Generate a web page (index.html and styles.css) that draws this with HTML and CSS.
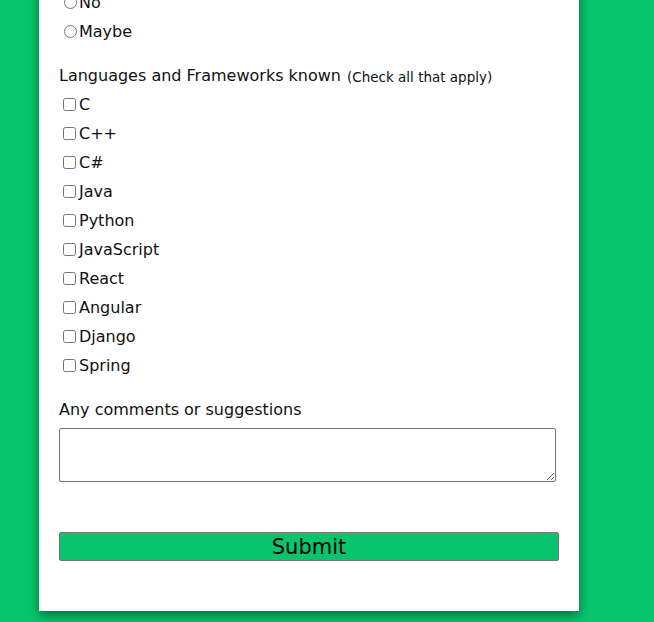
FILE: index.html
```html
<!DOCTYPE html>
<html>
<head>
<meta charset="utf-8">
<link rel="stylesheet" href="styles.css">
</head>
<body>
<form class="card">
  <div class="option"><input type="radio" name="rec" id="no"><label for="no">No</label></div>
  <div class="option"><input type="radio" name="rec" id="maybe"><label for="maybe">Maybe</label></div>

  <div class="heading">Languages and Frameworks known <span class="hint">(Check all that apply)</span></div>
  <div class="option"><input type="checkbox" id="c"><label for="c">C</label></div>
  <div class="option"><input type="checkbox" id="cpp"><label for="cpp">C++</label></div>
  <div class="option"><input type="checkbox" id="cs"><label for="cs">C#</label></div>
  <div class="option"><input type="checkbox" id="java"><label for="java">Java</label></div>
  <div class="option"><input type="checkbox" id="python"><label for="python">Python</label></div>
  <div class="option"><input type="checkbox" id="js"><label for="js">JavaScript</label></div>
  <div class="option"><input type="checkbox" id="react"><label for="react">React</label></div>
  <div class="option"><input type="checkbox" id="angular"><label for="angular">Angular</label></div>
  <div class="option"><input type="checkbox" id="django"><label for="django">Django</label></div>
  <div class="option"><input type="checkbox" id="spring"><label for="spring">Spring</label></div>

  <div class="heading">Any comments or suggestions</div>
  <textarea class="comments"></textarea>

  <button type="button" class="submit">Submit</button>
</form>
</body>
</html>
```

FILE: styles.css
```css
html, body {
  margin: 0;
  padding: 0;
}
body {
  background: #08c46c;
  font-family: "DejaVu Sans", sans-serif;
  font-size: 16px;
  color: #111;
  overflow: hidden;
  height: 622px;
}
.card {
  box-sizing: border-box;
  width: 540px;
  margin: -32px 0 0 39px;
  padding: 20px 20px 50px 20px;
  background: #fff;
  box-shadow: 0 4px 10px rgba(0, 0, 0, 0.45);
  display: flex;
  flex-direction: column;
}
.option {
  height: 29px;
  display: flex;
  align-items: center;
}
.option input {
  margin: 0 3px 0 4px;
  width: 13px;
  height: 13px;
}
.option input[type="radio"] {
  margin-left: 5px;
  margin-right: 2px;
}
.heading {
  height: 29px;
  margin-top: 15px;
  display: flex;
  align-items: center;
  gap: 6px;
}
.hint {
  font-size: 13.5px;
  margin-top: 2px;
}
.comments {
  box-sizing: border-box;
  width: 497px;
  height: 54px;
  margin: 4px 0 0 0;
  border: 1px solid #767676;
  border-radius: 2px;
  resize: vertical;
}
.submit {
  box-sizing: border-box;
  width: 500px;
  height: 29px;
  margin-top: 50px;
  background: #08c46c;
  border: 1px solid #767676;
  border-radius: 2px;
  font-family: inherit;
  font-size: 21px;
  color: #000;
  padding: 0;
}
```
